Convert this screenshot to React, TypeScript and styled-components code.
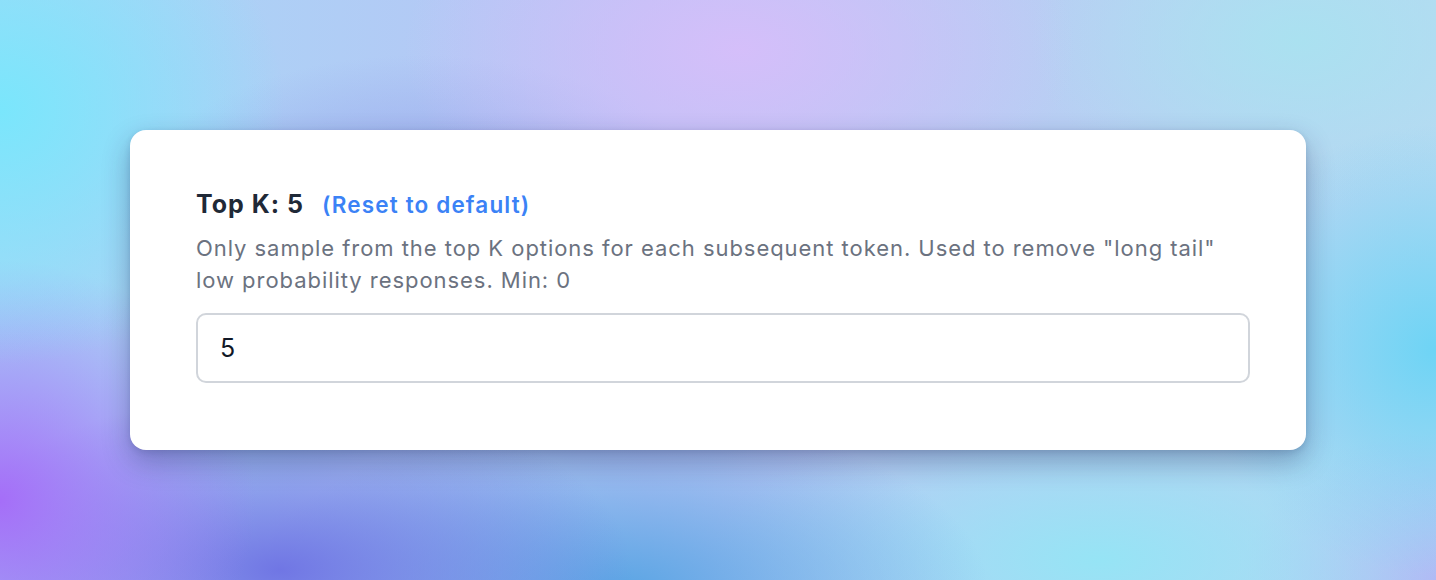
import React from 'react';
import styled, { createGlobalStyle } from 'styled-components';

const GlobalStyle = createGlobalStyle`
  html, body {
    margin: 0;
    padding: 0;
  }
  body {
    font-family: Inter, "Noto Sans", sans-serif;
  }
`;

const Backdrop = styled.div`
  width: 1436px;
  height: 580px;
  box-sizing: border-box;
  padding: 130px 130px 0 130px;
  overflow: hidden;
  background:
    radial-gradient(ellipse 480px 280px at 740px 50px, rgba(214, 190, 250, 0.95), rgba(214, 190, 250, 0) 70%),
    radial-gradient(ellipse 380px 340px at 0px 110px, rgba(122, 230, 252, 1), rgba(122, 230, 252, 0) 75%),
    radial-gradient(ellipse 320px 300px at 0px 500px, rgba(165, 110, 248, 1), rgba(165, 110, 248, 0) 80%),
    radial-gradient(ellipse 440px 220px at 280px 570px, rgba(112, 118, 228, 1), rgba(112, 118, 228, 0) 80%),
    radial-gradient(ellipse 460px 220px at 620px 590px, rgba(90, 165, 228, 1), rgba(90, 165, 228, 0) 80%),
    radial-gradient(ellipse 520px 220px at 1100px 560px, rgba(150, 228, 245, 1), rgba(150, 228, 245, 0) 75%),
    radial-gradient(ellipse 320px 300px at 1436px 350px, rgba(110, 212, 245, 1), rgba(110, 212, 245, 0) 75%),
    radial-gradient(ellipse 260px 200px at 1436px 580px, rgba(180, 180, 245, 1), rgba(180, 180, 245, 0) 75%),
    radial-gradient(ellipse 400px 220px at 420px 220px, rgba(150, 165, 235, 1), rgba(150, 165, 235, 0) 75%),
    radial-gradient(ellipse 360px 220px at 1300px 40px, rgba(170, 225, 240, 1), rgba(170, 225, 240, 0) 75%),
    linear-gradient(90deg, #a6d8f6 0%, #b9c3f5 45%, #b7d9f2 100%);
`;

const Card = styled.div`
  width: 1176px;
  height: 320px;
  box-sizing: border-box;
  background: #ffffff;
  border-radius: 16px;
  box-shadow: 0 12px 28px rgba(20, 30, 80, 0.32), 0 2px 6px rgba(20, 30, 80, 0.12);
  padding: 56px 56px 0 66px;
  display: flex;
  flex-direction: column;
`;

const LabelRow = styled.div`
  display: flex;
  align-items: baseline;
  gap: 18px;
  height: 36px;
  line-height: 36px;
`;

const Label = styled.span`
  font-size: 25px;
  font-weight: 700;
  letter-spacing: 1px;
  color: #1f2937;
`;

const ResetLink = styled.a`
  font-size: 22.5px;
  font-weight: 600;
  letter-spacing: 1.15px;
  color: #3b82f6;
  cursor: pointer;
  text-decoration: none;
`;

const Description = styled.p`
  margin: 10px 0 0 0;
  font-size: 22px;
  line-height: 32px;
  letter-spacing: 0.95px;
  color: #6b7280;
  max-width: 1054px;
`;

const NumberInput = styled.input`
  margin-top: 17px;
  width: 1054px;
  height: 70px;
  box-sizing: border-box;
  border: 2px solid #d1d5db;
  border-radius: 10px;
  padding: 0 22px;
  font-family: Inter, "Noto Sans", sans-serif;
  font-size: 25px;
  color: #111827;
  background: #ffffff;
  outline: none;
`;

export default function App() {
  return (
    <>
      <GlobalStyle />
      <Backdrop>
        <Card>
          <LabelRow>
            <Label>Top K: 5</Label>
            <ResetLink>(Reset to default)</ResetLink>
          </LabelRow>
          <Description>
            Only sample from the top K options for each subsequent token. Used to remove "long tail"
            low probability responses. Min: 0
          </Description>
          <NumberInput type="text" defaultValue="5" />
        </Card>
      </Backdrop>
    </>
  );
}
